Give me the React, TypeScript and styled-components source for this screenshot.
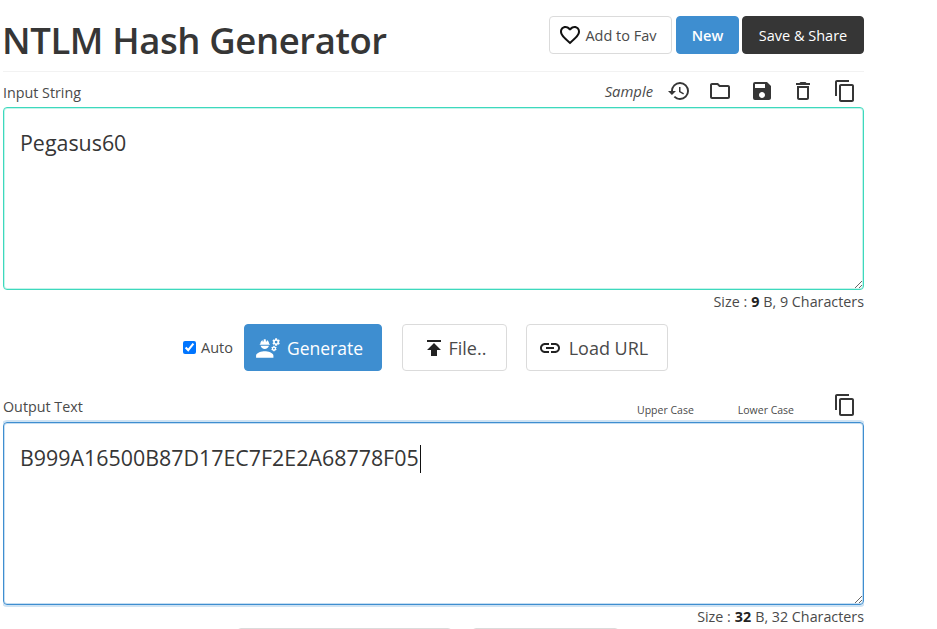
import React from "react";
import styled, { createGlobalStyle } from "styled-components";
import {
  MdContentCopy,
  MdEngineering,
  MdFavoriteBorder,
  MdHistory,
  MdLink,
  MdOutlineDelete,
  MdOutlineFolder,
  MdPublish,
  MdSave,
} from "react-icons/md";

const GlobalStyle = createGlobalStyle`
  html, body {
    margin: 0;
    height: 100%;
    overflow: hidden;
    background: #fff;
  }
  body {
    font-family: "Open Sans", "Noto Sans", "Liberation Sans", sans-serif;
    color: #4a4a4a;
  }
`;

const Page = styled.div`
  width: 861px;
  height: 629px;
  overflow: hidden;
  margin-left: 3px;
  display: flex;
  flex-direction: column;
`;

const Header = styled.header`
  flex: none;
  height: 72px;
  box-sizing: border-box;
  display: flex;
  align-items: flex-start;
  justify-content: space-between;
  border-bottom: 1px solid #f2f2f2;
`;

const Title = styled.h1`
  margin: 16px 0 0 -1px;
  font-size: 36.5px;
  line-height: 48px;
  font-weight: 600;
  color: #363636;
  letter-spacing: -0.4px;
  white-space: nowrap;
`;

const HeaderActions = styled.div`
  display: flex;
  margin-top: 16px;
`;

const Button = styled.button<{ $variant?: "light" | "primary" | "dark"; $big?: boolean }>`
  box-sizing: border-box;
  display: inline-flex;
  align-items: center;
  justify-content: center;
  height: ${(p) => (p.$big ? "47px" : "38px")};
  padding: 0;
  border-radius: 4px;
  font-family: inherit;
  font-size: ${(p) => (p.$big ? "18px" : "14.5px")};
  font-weight: ${(p) => (p.$variant === "primary" && !p.$big ? 600 : 400)};
  border: 1px solid
    ${(p) =>
      p.$variant === "primary"
        ? "#3e8ed0"
        : p.$variant === "dark"
          ? "#363636"
          : "#dbdbdb"};
  background: ${(p) =>
    p.$variant === "primary"
      ? "#3e8ed0"
      : p.$variant === "dark"
        ? "#363636"
        : "#fff"};
  color: ${(p) => (p.$variant === "primary" || p.$variant === "dark" ? "#fff" : "#4a4a4a")};
`;

const FavButton = styled(Button)`
  width: 123px;
  gap: 3px;
  padding-right: 6px;
  margin-right: 4px;
  svg {
    color: #111;
  }
`;

const NewButton = styled(Button)`
  width: 63px;
  margin-right: 3px;
`;

const ShareButton = styled(Button)`
  width: 122px;
`;

const LabelRow = styled.div<{ $height: number; $top: number }>`
  flex: none;
  box-sizing: border-box;
  height: ${(p) => p.$height}px;
  padding-top: ${(p) => p.$top}px;
  display: flex;
  align-items: center;
  justify-content: space-between;
`;

const Label = styled.label`
  font-size: 14.3px;
  color: #4a4a4a;
`;

const Tools = styled.div<{ $alignEnd?: boolean }>`
  display: flex;
  align-items: ${(p) => (p.$alignEnd ? "flex-end" : "center")};
  margin-top: -2px;
  color: #363636;
`;

const SampleLink = styled.span`
  font-size: 14.8px;
  font-style: italic;
  color: #4a4a4a;
  margin-right: 14px;
`;

const ToolIcon = styled.span<{ $gap?: number }>`
  display: inline-flex;
  margin-right: ${(p) => p.$gap ?? 0}px;
`;

const CaseLink = styled.span<{ $gap: number }>`
  font-size: 10.5px;
  line-height: 14px;
  color: #4a4a4a;
  margin-right: ${(p) => p.$gap}px;
`;

const TextBox = styled.div<{ $focused?: boolean }>`
  flex: none;
  box-sizing: border-box;
  width: 100%;
  height: 183px;
  padding: 20px 16px;
  border-radius: 4px;
  border: 1px solid ${(p) => (p.$focused ? "#3e8ed0" : "#3dd9bd")};
  box-shadow: ${(p) =>
    p.$focused
      ? "0 0 0 2px rgba(62, 142, 208, 0.25), inset 0 0 0 1px rgba(62, 142, 208, 0.3)"
      : "inset 0 0 0 1px rgba(61, 217, 189, 0.3)"};
  font-size: 21.4px;
  line-height: 30px;
  color: #363636;
  resize: vertical;
  overflow: auto;
`;

const Caret = styled.span`
  display: inline-block;
  width: 1px;
  height: 28px;
  margin-left: 1px;
  background: #111;
  vertical-align: -7px;
`;

const SizeRow = styled.div`
  flex: none;
  height: 22px;
  display: flex;
  align-items: center;
  justify-content: flex-end;
  font-size: 14.3px;
  color: #4a4a4a;
  b {
    color: #222;
    margin: 0 4px;
  }
`;

const ActionRow = styled.div`
  flex: none;
  height: 47px;
  margin-top: 12px;
  padding-left: 180px;
  display: flex;
  align-items: center;
`;

const AutoCheck = styled.label`
  display: inline-flex;
  align-items: center;
  gap: 5px;
  margin-right: 11px;
  font-size: 14.5px;
  color: #4a4a4a;
  input {
    margin: 0;
    width: 13px;
    height: 13px;
    accent-color: #0075ff;
  }
`;

const GenerateButton = styled(Button)`
  width: 138px;
  gap: 6px;
  padding-right: 8px;
  margin-right: 20px;
  font-size: 17.5px;
`;

const FileButton = styled(Button)`
  width: 105px;
  gap: 2px;
  margin-right: 19px;
  color: #4a4a4a;
  svg {
    color: #222;
  }
`;

const UrlButton = styled(Button)`
  width: 142px;
  gap: 7px;
  padding-right: 8px;
  svg {
    color: #222;
  }
`;

const BottomRow = styled.div`
  flex: none;
  display: flex;
  margin-top: 1px;
  padding-left: 234px;
  gap: 20px;
`;

const CutOffButton = styled.div<{ $width: number }>`
  box-sizing: border-box;
  width: ${(p) => p.$width}px;
  height: 40px;
  border: 1px solid #dbdbdb;
  border-radius: 4px;
`;

export default function App() {
  return (
    <>
      <GlobalStyle />
      <Page>
        <Header>
          <Title>NTLM Hash Generator</Title>
          <HeaderActions>
            <FavButton>
              <MdFavoriteBorder size={24} />
              Add to Fav
            </FavButton>
            <NewButton $variant="primary">New</NewButton>
            <ShareButton $variant="dark">Save &amp; Share</ShareButton>
          </HeaderActions>
        </Header>

        <LabelRow $height={35} $top={5}>
          <Label>Input String</Label>
          <Tools>
            <SampleLink>Sample</SampleLink>
            <ToolIcon $gap={17}><MdHistory size={24} /></ToolIcon>
            <ToolIcon $gap={18}><MdOutlineFolder size={24} /></ToolIcon>
            <ToolIcon $gap={17}><MdSave size={24} /></ToolIcon>
            <ToolIcon $gap={18}><MdOutlineDelete size={24} /></ToolIcon>
            <ToolIcon $gap={7}><MdContentCopy size={24} /></ToolIcon>
          </Tools>
        </LabelRow>
        <TextBox>Pegasus60</TextBox>
        <SizeRow>
          Size :<b>9</b>B, 9 Characters
        </SizeRow>

        <ActionRow>
          <AutoCheck>
            <input type="checkbox" defaultChecked />
            Auto
          </AutoCheck>
          <GenerateButton $variant="primary" $big>
            <MdEngineering size={26} />
            Generate
          </GenerateButton>
          <FileButton $big>
            <MdPublish size={24} />
            File..
          </FileButton>
          <UrlButton $big>
            <MdLink size={24} />
            Load URL
          </UrlButton>
        </ActionRow>

        <LabelRow $height={51} $top={19}>
          <Label>Output Text</Label>
          <Tools $alignEnd>
            <CaseLink $gap={44}>Upper Case</CaseLink>
            <CaseLink $gap={39}>Lower Case</CaseLink>
            <ToolIcon $gap={7}><MdContentCopy size={24} /></ToolIcon>
          </Tools>
        </LabelRow>
        <TextBox $focused>
          B999A16500B87D17EC7F2E2A68778F05
          <Caret />
        </TextBox>
        <SizeRow>
          Size :<b>32</b>B, 32 Characters
        </SizeRow>
        <BottomRow>
          <CutOffButton $width={215} />
          <CutOffButton $width={147} />
        </BottomRow>
      </Page>
    </>
  );
}
